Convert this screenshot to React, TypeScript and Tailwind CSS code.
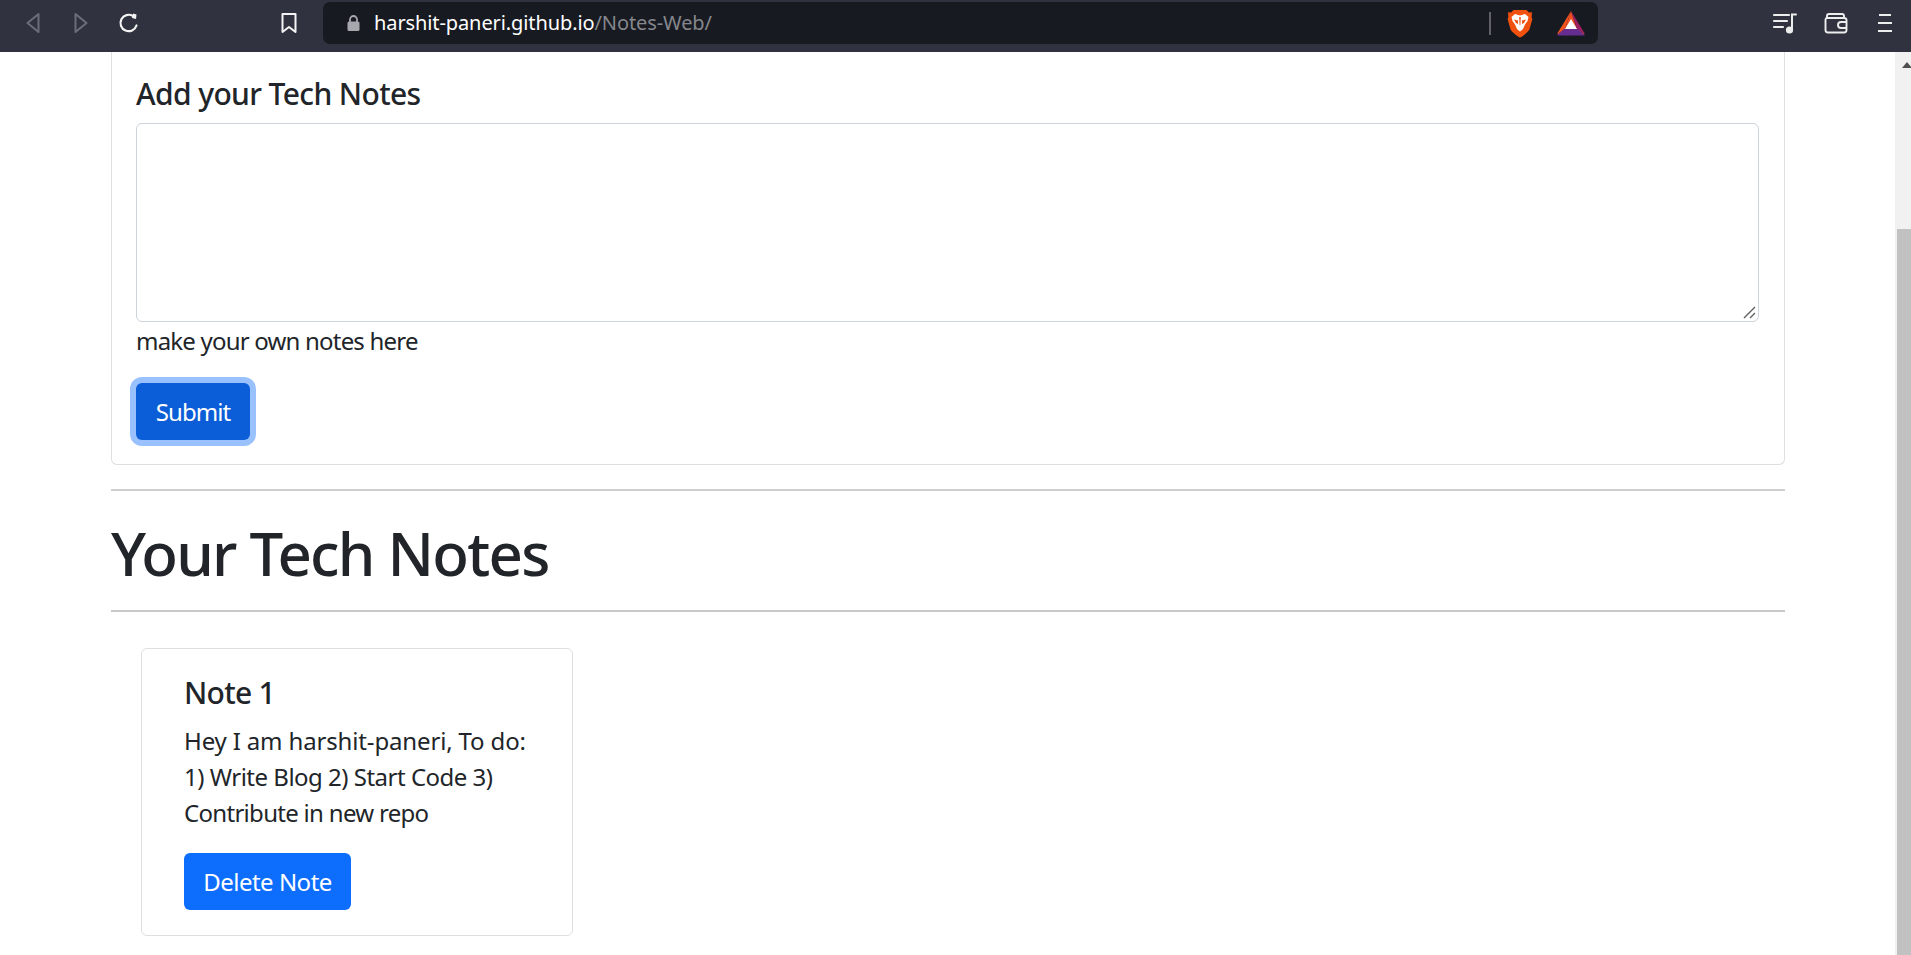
import React from "react";

const font = { fontFamily: '"Noto Sans", "Open Sans", sans-serif' };

function Back({ flip }: { flip?: boolean }) {
  return (
    <svg width="16" height="24" viewBox="0 0 16 24" fill="none" stroke="#6b6e78" strokeWidth="2" strokeLinejoin="round" style={flip ? { transform: "scaleX(-1)" } : undefined}>
      <path d="M13.5 3 L2.5 12 L13.5 21 Z" />
    </svg>
  );
}

function Brave() {
  return (
    <svg width="26" height="29" viewBox="0 0 26 29">
      <path d="M6.5 1 L19.5 1 L22 3.6 L25 3.2 L24.6 8 L25.4 10 L22.6 20 C21.5 23 16 27 13 28.6 C10 27 4.5 23 3.4 20 L.6 10 L1.4 8 L1 3.2 L4 3.6 Z" fill="#f1510f" />
      <path d="M8 5 L13 6.5 L18 5 L21.5 8 L20.5 12 L18 15.5 L16.5 19 L15.5 20.5 L13 22.5 L10.5 20.5 L9.5 19 L8 15.5 L5.5 12 L4.5 8 Z" fill="#fff" />
      <path d="M7 10.5 L11 11.5 L11 15 L9 14 Z M19 10.5 L15 11.5 L15 15 L17 14 Z M12.2 8 L13.8 8 L13.4 16 L12.6 16 Z" fill="#f1510f" />
    </svg>
  );
}

function Bat() {
  return (
    <svg width="28" height="25" viewBox="0 0 28 25">
      <path d="M14 0 L0 23 L8 18 Z" fill="#f4511e" />
      <path d="M14 0 L8 18 L0 23 L28 23 L20 18 Z" fill="#ef4d23" />
      <path d="M14 0 L20 18 L28 23 Z" fill="#9e1f63" />
      <path d="M0 24.5 L7 18 L21 18 L28 24.5 Z" fill="#662d91" />
      <path d="M14 8 L20 18 L8 18 Z" fill="#fff" />
    </svg>
  );
}

export default function App() {
  return (
    <div className="h-[955px] overflow-hidden flex flex-col bg-white text-[#212529] text-[24px] leading-[36px]" style={font}>
      <header className="h-[52px] shrink-0 bg-[#30333f] flex items-center pl-[25px] pb-[6px]">
        <Back />
        <div className="ml-[32px]"><Back flip /></div>
        <svg className="ml-[28px]" width="24" height="24" viewBox="0 0 24 24" fill="none" stroke="#f4f4f5" strokeWidth="2.2" strokeLinecap="round">
          <path d="M19.5 14.5 A8.2 8.2 0 1 1 16 5" />
          <path d="M16.2 2.5 L19.5 3.5 L19 8 L15 7 Z" fill="#f4f4f5" stroke="none" />
        </svg>
        <svg className="ml-[139px]" width="18" height="24" viewBox="0 0 18 24" fill="none" stroke="#f4f4f5" strokeWidth="2" strokeLinejoin="round">
          <path d="M2.5 3 H15.5 V21 L9 16 L2.5 21 Z" />
        </svg>
        <div className="ml-[25px] w-[1275px] h-[42px] bg-[#181a21] rounded-[7px] flex items-center pl-[23px]">
          <svg width="15" height="18" viewBox="0 0 15 18">
            <path d="M4 8 V5.5 a3.5 3.5 0 0 1 7 0 V8" fill="none" stroke="#a6a8ad" strokeWidth="1.8" />
            <rect x="1.5" y="7.5" width="12" height="9.5" rx="1.5" fill="#a6a8ad" />
          </svg>
          <div className="ml-[13px] text-[20px] leading-[28px] tracking-[-0.1px]">
            <span className="text-white">harshit-paneri.github.io</span>
            <span className="text-[#85878c]">/Notes-Web/</span>
          </div>
          <div className="ml-auto w-[2px] h-[23px] bg-[#5f6166]" />
          <div className="ml-[16px]"><Brave /></div>
          <div className="ml-[24px] mr-[13px]"><Bat /></div>
        </div>
        <svg className="ml-[174px]" width="26" height="24" viewBox="0 0 26 24" fill="none" stroke="#eceded" strokeWidth="2.2" strokeLinecap="round">
          <path d="M2 4 H17 M2 10 H15 M2 16 H11" />
          <path d="M20 18 V3.5 H24" strokeWidth="2" />
          <circle cx="17.5" cy="19" r="3.6" fill="#eceded" stroke="none" />
        </svg>
        <svg className="ml-[26px]" width="24" height="22" viewBox="0 0 24 22" fill="none" stroke="#eceded" strokeWidth="1.9" strokeLinejoin="round">
          <path d="M3 6 L3 4 Q3 2 5 2 H18 Q20 2 20 4 V6 M3 6 Q1.5 6 1.5 8 V18 Q1.5 20.5 4 20.5 H20 Q22.5 20.5 22.5 18 V8 Q22.5 6 20 6 H3" />
          <path d="M22.5 10 H17 Q14 10 14 13 Q14 16 17 16 H22.5" />
        </svg>
        <svg className="ml-[29px]" width="16" height="20" viewBox="0 0 16 20" stroke="#eceded" strokeWidth="2">
          <path d="M2 2 H14 M1 10 H15 M1 18 H15" />
        </svg>
      </header>

      <div className="flex-1 min-h-0 flex">
        <main className="flex-1 min-w-0 pl-[111px] pr-[110px]">
          <section className="border border-t-0 border-[#dfdfdf] rounded-b-[6px] h-[413px] pl-[24px] pr-[25px] pt-[24px]">
            <h2 className="text-[30px] leading-[36px] font-medium tracking-[-0.62px] pb-[11px]">Add your Tech Notes</h2>
            <div className="relative h-[199px]">
              <textarea className="block w-full h-full resize-none border border-[#ced4da] rounded-[6px] bg-white outline-none" />
              <svg className="absolute right-[3px] bottom-[3px]" width="13" height="13" viewBox="0 0 13 13" stroke="#5f5f5f" strokeWidth="1.4">
                <path d="M1 12 L12 1 M7 12 L12 7" />
              </svg>
            </div>
            <div className="mt-[1px] tracking-[-0.8px]">make your own notes here</div>
            <button className="mt-[24px] block h-[57px] w-[114px] bg-[#0b5ed7] text-white rounded-[6px] shadow-[0_0_0_6px_#98c1fe] tracking-[-0.95px]">Submit</button>
          </section>
          <hr className="mt-[24px] border-0 h-[2px] bg-[#cfcfcf]" />
          <h1 className="text-[60px] leading-[72px] font-medium tracking-[-1.74px] mt-[26px]">Your Tech Notes</h1>
          <hr className="mt-[21px] border-0 h-[2px] bg-[#c8c8c8]" />
          <article className="ml-[30px] mt-[36px] w-[432px] h-[288px] border border-[#dfdfdf] rounded-[6px] pl-[42px] pt-[26px]">
            <h3 className="text-[30px] leading-[36px] font-medium tracking-[-0.7px]">Note 1</h3>
            <p className="mt-[12px]">
              <span className="block tracking-[-0.15px]">Hey I am harshit-paneri, To do:</span>
              <span className="block tracking-[-0.5px]">1) Write Blog 2) Start Code 3)</span>
              <span className="block tracking-[-0.7px]">Contribute in new repo</span>
            </p>
            <button className="mt-[22px] block h-[57px] w-[167px] bg-[#0d6efd] text-white rounded-[6px] tracking-[-0.5px]">Delete Note</button>
          </article>
        </main>
        <aside className="w-[16px] shrink-0 bg-[#f1f1f1] flex flex-col items-end">
          <svg className="mt-[10px] shrink-0" width="9" height="6" viewBox="0 0 9 6"><path d="M5 0 L10 6 H0 Z" fill="#505050" /></svg>
          <div className="mt-[161px] w-[14px] flex-1 bg-[#c1c1c1]" />
        </aside>
      </div>
    </div>
  );
}
